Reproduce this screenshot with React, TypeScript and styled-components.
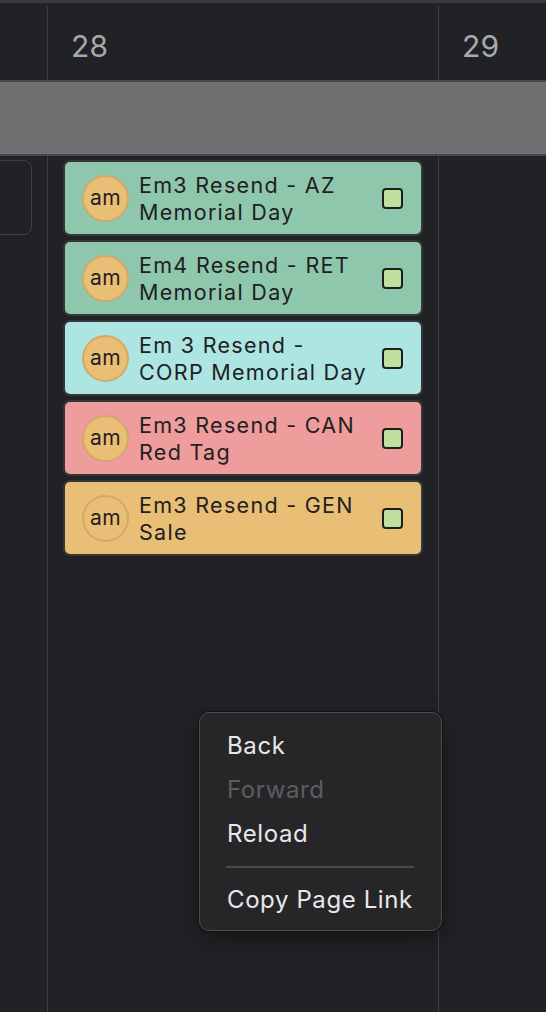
import { createGlobalStyle } from "styled-components"
import styled from "styled-components"

const GlobalStyle = createGlobalStyle`
	html, body {
		margin: 0;
		padding: 0;
		background: #212225;
		font-family: Inter, "Noto Sans", "Liberation Sans", sans-serif;
	}
	#root {
		height: 1012px;
	}
`

type Event = { title: string; color: string }

const events: Event[] = [
	{ title: "Em3 Resend - AZ Memorial Day", color: "#8fc7ad" },
	{ title: "Em4 Resend - RET Memorial Day", color: "#8fc7ad" },
	{ title: "Em 3 Resend - CORP Memorial Day", color: "#ade5e2" },
	{ title: "Em3 Resend - CAN Red Tag", color: "#ee9c9c" },
	{ title: "Em3 Resend - GEN Sale", color: "#e8bf75" },
]

export default function App() {
	return (
		<>
			<GlobalStyle />
			<Page>
				<Header>
					<HeadCell width="47px" />
					<HeadCell width="391px" divider>
						<DayNumber>28</DayNumber>
					</HeadCell>
					<HeadCell width="auto" divider grow>
						<DayNumber>29</DayNumber>
					</HeadCell>
				</Header>
				<AllDayBand />
				<Body>
					<Column width="47px">
						<GhostCard />
					</Column>
					<Column width="391px" divider>
						{events.map((e) => (
							<EventCard key={e.title} bg={e.color}>
								<Avatar>am</Avatar>
								<Title>{e.title}</Title>
								<Check />
							</EventCard>
						))}
					</Column>
					<Column width="auto" divider grow />
				</Body>

				<Menu>
					<MenuItem>Back</MenuItem>
					<MenuItem disabled>Forward</MenuItem>
					<MenuItem>Reload</MenuItem>
					<Separator />
					<MenuItem>Copy Page Link</MenuItem>
				</Menu>
			</Page>
		</>
	)
}

const Page = styled.div`
	position: relative;
	height: 1012px;
	width: 546px;
	overflow: hidden;
	display: flex;
	flex-direction: column;
	border-top: 3px solid #3a3b3e;
	box-sizing: border-box;
`

const Header = styled.div`
	display: flex;
	height: 77px;
	border-bottom: 2px solid #48494c;
`

const HeadCell = styled.div<{ width: string; divider?: boolean; grow?: boolean }>`
	width: ${(p) => p.width};
	flex: ${(p) => (p.grow ? "1" : "none")};
	border-left: ${(p) => (p.divider ? "1px solid #3d3e41" : "none")};
	margin-top: 3px;
	padding-left: 23px;
	box-sizing: border-box;
	display: flex;
	align-items: center;
	&:first-child {
		padding-left: 0;
	}
`

const DayNumber = styled.span`
	color: #a9a9ab;
	font-size: 30px;
	font-weight: 400;
	margin-top: 5px;
	letter-spacing: 0.3px;
`

const AllDayBand = styled.div`
	height: 72px;
	background: #6f7072;
	border-bottom: 2px solid #48494c;
`

const Body = styled.div`
	flex: 1;
	display: flex;
`

const Column = styled.div<{ width: string; divider?: boolean; grow?: boolean }>`
	width: ${(p) => p.width};
	flex: ${(p) => (p.grow ? "1" : "none")};
	border-left: ${(p) => (p.divider ? "1px solid #3d3e41" : "none")};
	box-sizing: border-box;
	display: flex;
	flex-direction: column;
	gap: 4px;
	padding: 4px 15px 0 15px;
	&:first-child {
		padding: 4px 15px 0 0;
	}
`

const GhostCard = styled.div`
	height: 75px;
	margin-left: -20px;
	border: 1.5px solid #3f4043;
	border-radius: 8px;
	box-sizing: border-box;
`

const EventCard = styled.div<{ bg: string }>`
	height: 76px;
	box-sizing: border-box;
	background: ${(p) => p.bg};
	border: 2px solid #35363a;
	border-radius: 7px;
	display: flex;
	align-items: center;
	padding: 0 18px 0 17px;
	gap: 10px;
`

const Avatar = styled.div`
	width: 47px;
	height: 47px;
	flex: none;
	border-radius: 50%;
	background: #e9bf76;
	border: 2px solid #d3a967;
	box-sizing: border-box;
	display: flex;
	align-items: center;
	justify-content: center;
	font-size: 21px;
	letter-spacing: 0.5px;
	color: #1f1f1f;
	padding-bottom: 2px;
`

const Title = styled.div`
	flex: 1;
	font-size: 21.5px;
	line-height: 27px;
	color: #1f2022;
	letter-spacing: 1.3px;
	padding-top: 1px;
`

const Check = styled.div`
	width: 21px;
	height: 21px;
	flex: none;
	box-sizing: border-box;
	border: 2px solid #1d1e20;
	border-radius: 4px;
	background: #c0e09e;
`

const Menu = styled.div`
	position: absolute;
	left: 199px;
	top: 709px;
	width: 243px;
	box-sizing: border-box;
	padding: 11px 0 8px 0;
	background: #262628;
	border: 1px solid #4e4e51;
	border-radius: 10px;
	box-shadow: 0 0 0 1px #111113, 0 8px 24px rgba(0, 0, 0, 0.4);
`

const MenuItem = styled.div<{ disabled?: boolean }>`
	height: 44px;
	line-height: 44px;
	padding-left: 27px;
	font-size: 24px;
	letter-spacing: 0.6px;
	color: ${(p) => (p.disabled ? "#5d5d60" : "#e8e8e8")};
`

const Separator = styled.div`
	height: 2px;
	background: #4a4a4d;
	margin: 10px 27px 10px 26px;
`
